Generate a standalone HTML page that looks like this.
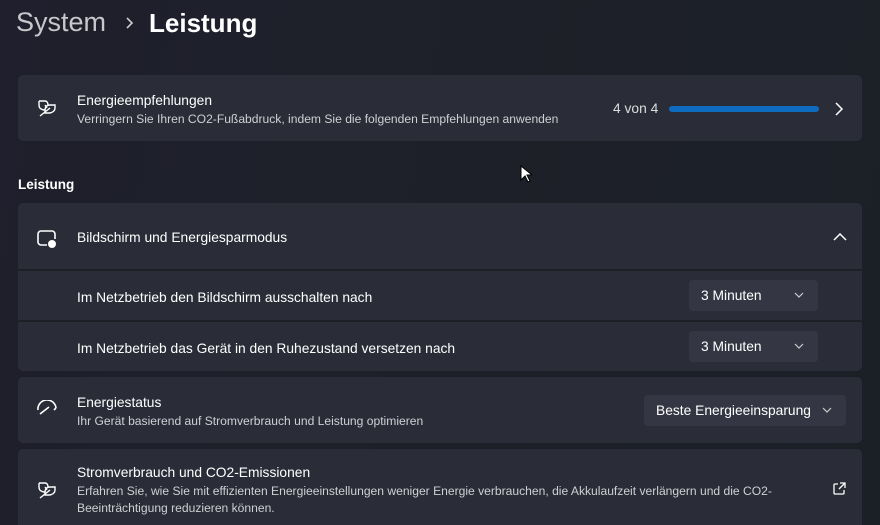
<!DOCTYPE html>
<html><head><meta charset="utf-8"><style>
*{margin:0;padding:0;box-sizing:border-box}
html,body{width:880px;height:525px;overflow:hidden}
body{background:linear-gradient(100deg,#1f1f2d 0%,#1e2029 50%,#1b2027 100%);font-family:"Liberation Sans",sans-serif;color:#fff;position:relative}
.a{position:absolute}
.card{position:absolute;left:18px;width:844px;background:#2a2d38;border-radius:5px}
.t{font-size:13.8px;color:#fff}
.s{font-size:12.1px;color:#cfd0d4}
.dd{position:absolute;background:#343743;border-radius:4px;height:31px;font-size:13.8px;color:#fff;line-height:31px;padding-left:12px}
.dd svg{position:absolute;right:14px;top:12px}
.sep{position:absolute;left:18px;width:844px;height:2px;background:#1e2028}
</style></head><body>
<div class="a" style="left:16px;top:7px;font-size:27px;color:#c8c8cc">System</div>
<svg class="a" style="left:125px;top:17px" width="10" height="12"><path d="M2 1l5 5-5 5" stroke="#ccc" stroke-width="1.6" fill="none"/></svg>
<div class="a" style="left:149px;top:8px;font-size:26px;color:#fff;font-weight:bold">Leistung</div>

<div class="card" style="top:75px;height:66px"></div>
<svg class="a" style="left:36px;top:98px" width="22" height="20" viewBox="0 0 22 20" fill="none" stroke="#fff" stroke-width="1.4"><path d="M3 3h6c2 0 3 2 3 4"/><path d="M3 3v4c0 3 2 5 6 5"/><path d="M9 7l2 3"/><path d="M19 7h-5c-3 0-5 2-5 5v3h4c3 0 6-2 6-5z"/><path d="M4 18l10-8"/></svg>
<div class="a t" style="left:77px;top:93px">Energieempfehlungen</div>
<div class="a s" style="left:77px;top:112px">Verringern Sie Ihren CO2-Fußabdruck, indem Sie die folgenden Empfehlungen anwenden</div>
<div class="a" style="left:613px;top:101px;font-size:13.8px;color:#ddd">4 von 4</div>
<div class="a" style="left:669px;top:106px;width:150px;height:6px;border-radius:3px;background:#0f6bc0"></div>
<svg class="a" style="left:834px;top:102px" width="10" height="14"><path d="M2 1l6 6-6 6" stroke="#fff" stroke-width="1.5" fill="none"/></svg>

<div class="a" style="left:18px;top:177px;font-size:13.5px;font-weight:bold">Leistung</div>

<div class="card" style="top:203px;height:168px"></div>
<div class="sep" style="top:269px"></div>
<div class="sep" style="top:320px"></div>
<svg class="a" style="left:36px;top:229px" width="22" height="20" viewBox="0 0 22 20" fill="none" stroke="#fff" stroke-width="1.6"><path d="M11 16H5a3 3 0 0 1-3-3V5a3 3 0 0 1 3-3h11a3 3 0 0 1 3 3v5"/><circle cx="16" cy="15" r="4" fill="#fff" stroke="none"/></svg>
<div class="a t" style="left:77px;top:230px">Bildschirm und Energiesparmodus</div>
<svg class="a" style="left:833px;top:233px" width="14" height="9"><path d="M1 7l6-6 6 6" stroke="#fff" stroke-width="1.5" fill="none"/></svg>
<div class="a t" style="left:77px;top:290px">Im Netzbetrieb den Bildschirm ausschalten nach</div>
<div class="a t" style="left:77px;top:341px">Im Netzbetrieb das Gerät in den Ruhezustand versetzen nach</div>
<div class="dd" style="left:689px;top:280px;width:129px">3 Minuten<svg width="10" height="6"><path d="M1 1l4 4 4-4" stroke="#ccc" stroke-width="1.2" fill="none"/></svg></div>
<div class="dd" style="left:689px;top:331px;width:129px">3 Minuten<svg width="10" height="6"><path d="M1 1l4 4 4-4" stroke="#ccc" stroke-width="1.2" fill="none"/></svg></div>

<div class="card" style="top:377px;height:66px"></div>
<svg class="a" style="left:36px;top:400px" width="22" height="18" viewBox="0 0 22 18" fill="none" stroke="#fff" stroke-width="1.6"><path d="M2 10A9 9 0 0 1 20 8"/><path d="M4 14l9-7"/><path d="M20 8l-2 2"/></svg>
<div class="a t" style="left:77px;top:395px">Energiestatus</div>
<div class="a s" style="left:77px;top:414px">Ihr Gerät basierend auf Stromverbrauch und Leistung optimieren</div>
<div class="dd" style="left:644px;top:395px;width:202px">Beste Energieeinsparung<svg width="10" height="6"><path d="M1 1l4 4 4-4" stroke="#ccc" stroke-width="1.2" fill="none"/></svg></div>

<div class="card" style="top:449px;height:90px"></div>
<svg class="a" style="left:36px;top:480px" width="22" height="20" viewBox="0 0 22 20" fill="none" stroke="#fff" stroke-width="1.4"><path d="M3 3h6c2 0 3 2 3 4"/><path d="M3 3v4c0 3 2 5 6 5"/><path d="M9 7l2 3"/><path d="M19 7h-5c-3 0-5 2-5 5v3h4c3 0 6-2 6-5z"/><path d="M4 18l10-8"/></svg>
<div class="a t" style="left:77px;top:465px">Stromverbrauch und CO2-Emissionen</div>
<div class="a s" style="left:77px;top:483px;line-height:17px">Erfahren Sie, wie Sie mit effizienten Energieeinstellungen weniger Energie verbrauchen, die Akkulaufzeit verlängern und die CO2-<br>Beeinträchtigung reduzieren können.</div>
<svg class="a" style="left:832px;top:482px" width="14" height="14" viewBox="0 0 14 14" fill="none" stroke="#fff" stroke-width="1.3"><path d="M6 2H3a1 1 0 0 0-1 1v8a1 1 0 0 0 1 1h8a1 1 0 0 0 1-1V8"/><path d="M8 1h5v5M13 1L7 7"/></svg>
<svg class="a" style="left:520px;top:165px" width="12" height="18"><path d="M1 1v14l4-4 3 6 2-1-3-6h5z" fill="#fff" stroke="#000" stroke-width="1"/></svg>
</body></html>
